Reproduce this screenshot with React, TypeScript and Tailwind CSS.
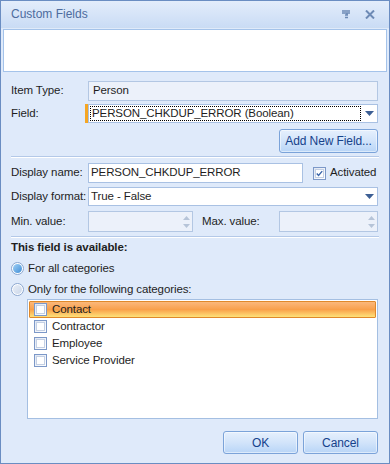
import React, { useState } from 'react';

const font = { fontFamily: '"Liberation Sans", Arial, sans-serif' };

const Arrow = () => (
  <svg width="9" height="5" viewBox="0 0 9 5"><path d="M0 0h9L4.5 5z" fill="#3d5f94" /></svg>
);

const Spin = () => (
  <div className="flex flex-col items-center justify-center gap-[4px] w-[12px]">
    <svg width="7" height="4" viewBox="0 0 7 4"><path d="M0 4h7L3.5 0z" fill="#b6c4d8" /></svg>
    <svg width="7" height="4" viewBox="0 0 7 4"><path d="M0 0h7L3.5 4z" fill="#b6c4d8" /></svg>
  </div>
);

const Check = ({ on }: { on?: boolean }) => (
  <div className="w-[13px] h-[13px] border border-[#7c98c8] bg-gradient-to-br from-[#dfe6f2] to-[#ffffff] flex items-center justify-center">
    <div className="w-[9px] h-[9px] border border-[#c4d0e4] bg-white flex items-center justify-center">
      {on && (
        <svg width="9" height="9" viewBox="0 0 9 9"><path d="M1 4.5l2.3 2.5L8 1.5" stroke="#3a64a8" strokeWidth="1.8" fill="none" /></svg>
      )}
    </div>
  </div>
);

const Radio = ({ on }: { on?: boolean }) => (
  <div className="w-[13px] h-[13px] rounded-full border border-[#8aa6cf] bg-white flex items-center justify-center">
    <div className={`w-[9px] h-[9px] rounded-full ${on ? 'bg-gradient-to-br from-[#9fd0f5] to-[#3e8ed6]' : 'bg-gradient-to-br from-[#e9eef6] to-[#cad7ea]'}`} />
  </div>
);

const Btn = ({ children, w, h }: { children: React.ReactNode; w: string; h: string }) => (
  <button className={`${w} ${h} rounded-[3px] border border-[#7ba3d9] bg-gradient-to-b from-[#e6f0fd] via-[#d2e4fa] to-[#b8d5f7] text-[#15428b] text-[12px] shadow-[inset_0_0_0_1px_#ffffff80]`}>
    {children}
  </button>
);

const Sep = () => <div className="border-t border-[#b4c9e8] border-b border-b-white" />;

export default function App() {
  const [all, setAll] = useState(true);
  const [active, setActive] = useState(true);
  const cats = ['Contact', 'Contractor', 'Employee', 'Service Provider'];

  return (
    <div style={font} className="w-[390px] h-[464px] border border-[#6a8dc2] bg-[#dfeafa] flex flex-col text-[11.5px] tracking-[-0.1px] text-[#1e1e1e] whitespace-nowrap">
      <div className="h-[27px] shrink-0 flex items-center justify-between pl-[10px] pr-[14px] bg-gradient-to-b from-[#e3edfb] to-[#cadcf5] border-b border-[#cbdcf2]">
        <span className="text-[12px] tracking-normal text-[#4d6c9e]">Custom Fields</span>
        <div className="flex items-center gap-[15px] text-[#6d8ab5]">
          <svg width="8" height="9" viewBox="0 0 8 9"><path d="M0 1h8M0 3h8M5 3v2M3 5h3M3 7.5h3" stroke="#6d8ab5" strokeWidth="1.6" fill="none" /></svg>
          <svg width="10" height="9" viewBox="0 0 10 9"><path d="M1 0.5l8 8M9 0.5l-8 8" stroke="#6d8ab5" strokeWidth="2" /></svg>
        </div>
      </div>

      <div className="mx-[2px] mt-px h-[43px] bg-white border border-[#a4c3ea] shrink-0" />

      <div className="flex-1 flex flex-col px-[10px]">
        <div className="flex items-center mt-[9px] h-[20px]">
          <span className="w-[77px]">Item Type:</span>
          <div className="flex-1 h-[20px] border border-[#b3c7e3] bg-[#ecf1fa] flex items-center px-[4px] mr-[1px]">Person</div>
        </div>

        <div className="flex items-center mt-[3px] h-[19px]">
          <span className="w-[74px]">Field:</span>
          <div className="w-[3px] h-[19px] bg-[#f5a623]" />
          <div className="flex-1 h-[19px] border border-[#a9c1e3] bg-white flex items-center mr-[1px]">
            <div className="flex-1 h-[15px] ml-px border border-dotted border-black flex items-center px-[1px] leading-none">PERSON_CHKDUP_ERROR (Boolean)</div>
            <div className="w-[16px] flex items-center justify-center"><Arrow /></div>
          </div>
        </div>

        <div className="flex justify-end mt-[6px] mr-[1px]">
          <Btn w="w-[99px]" h="h-[24px]">Add New Field...</Btn>
        </div>

        <div className="mt-[3px]"><Sep /></div>

        <div className="flex items-center mt-[5px] h-[20px]">
          <span className="w-[77px]">Display name:</span>
          <div className="w-[215px] h-[20px] border border-[#a9c1e3] bg-white flex items-center px-[2px]">PERSON_CHKDUP_ERROR</div>
          <div className="ml-[10px] flex items-center gap-[4px] cursor-pointer" onClick={() => setActive(!active)}>
            <Check on={active} />
            <span>Activated</span>
          </div>
        </div>

        <div className="flex items-center mt-[4px] h-[19px]">
          <span className="w-[77px]">Display format:</span>
          <div className="flex-1 h-[19px] border border-[#a9c1e3] bg-white flex items-center pl-[2px] mr-[1px]">
            <span className="flex-1">True - False</span>
            <div className="w-[16px] flex items-center justify-center"><Arrow /></div>
          </div>
        </div>

        <div className="flex items-center mt-[5px] h-[21px]">
          <span className="w-[77px] text-[#1e1e1e]">Min. value:</span>
          <div className="w-[105px] h-[21px] border border-[#b3c7e3] bg-[#ecf1fa] flex justify-end"><Spin /></div>
          <span className="ml-[9px] w-[77px]">Max. value:</span>
          <div className="flex-1 h-[21px] border border-[#b3c7e3] bg-[#ecf1fa] flex justify-end mr-[1px]"><Spin /></div>
        </div>

        <div className="mt-[4px]"><Sep /></div>

        <div className="mt-px font-bold h-[17px] flex items-center">This field is available:</div>

        <div className="flex items-center gap-[4px] mt-[4px] h-[17px] cursor-pointer" onClick={() => setAll(true)}>
          <Radio on={all} />
          <span>For all categories</span>
        </div>
        <div className="flex items-center gap-[4px] mt-[4px] h-[17px] cursor-pointer" onClick={() => setAll(false)}>
          <Radio on={!all} />
          <span>Only for the following categories:</span>
        </div>

        <div className="ml-[16px] mr-[1px] mt-[1px] h-[120px] border border-[#a4bfe2] bg-white p-px">
          {cats.map((c, i) => (
            <div
              key={c}
              className={`h-[17px] flex items-center gap-[5px] pl-[4px] ${i === 0 ? 'border border-[#e0892a] rounded-[1px] bg-gradient-to-b from-[#fbb87a] via-[#f8a04a] to-[#fde27a]' : 'border border-transparent'}`}
            >
              <Check />
              <span>{c}</span>
            </div>
          ))}
        </div>

        <div className="flex justify-end gap-[5px] mt-[12px] mr-[1px]">
          <Btn w="w-[75px]" h="h-[23px]">OK</Btn>
          <Btn w="w-[75px]" h="h-[23px]">Cancel</Btn>
        </div>
      </div>
    </div>
  );
}
